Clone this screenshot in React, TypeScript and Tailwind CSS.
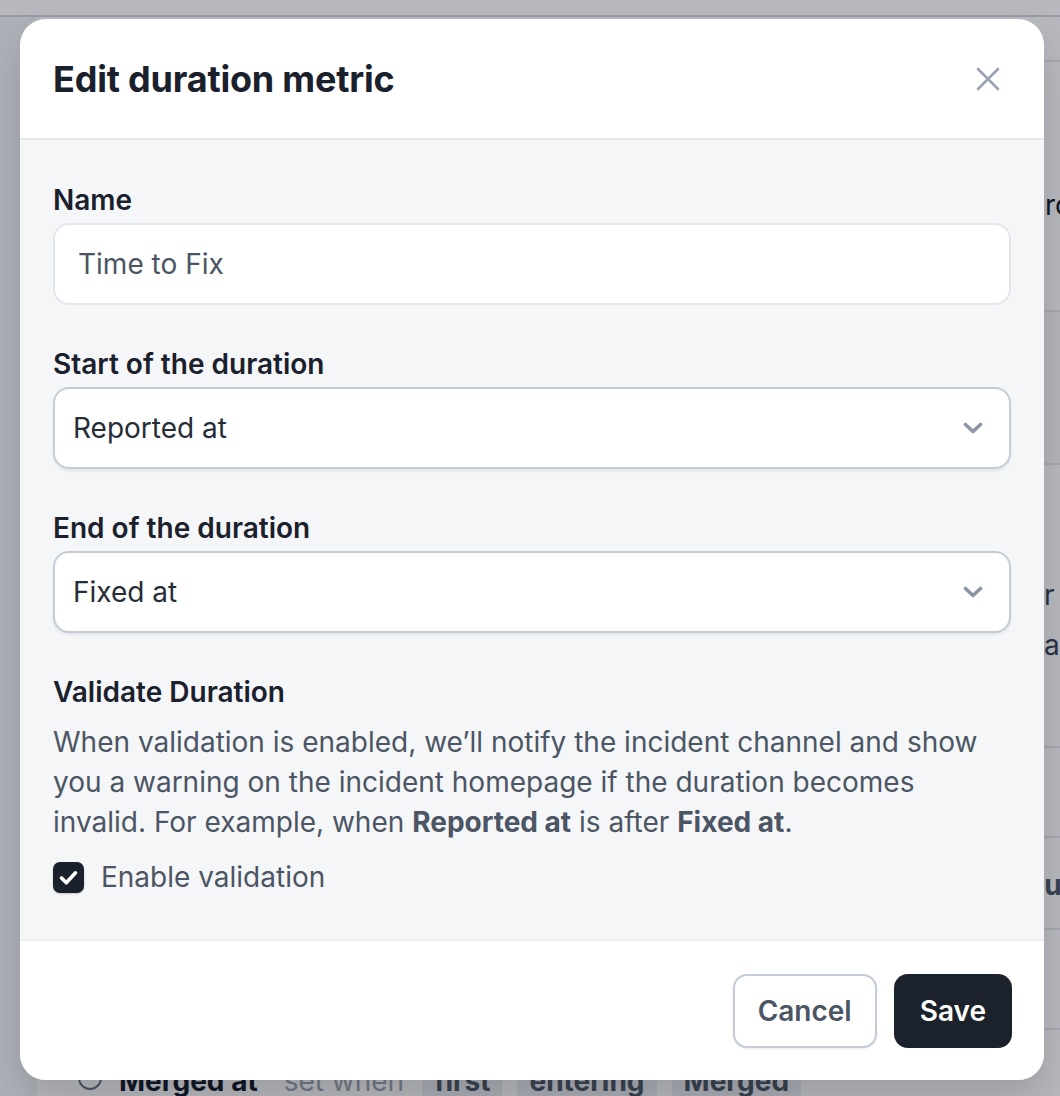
import { useState } from 'react';

const font = { fontFamily: 'Inter, "Noto Sans", sans-serif' };

const ChevronDown = () => (
  <svg width="20" height="12" viewBox="0 0 20 12" fill="none" className="shrink-0">
    <path d="M2.5 2.5 10 9.5l7.5-7" stroke="#8b95a5" strokeWidth="3.6" strokeLinecap="round" strokeLinejoin="round" />
  </svg>
);

const CloseIcon = () => (
  <svg width="24" height="24" viewBox="0 0 24 24" fill="none">
    <path d="M2 2l20 20M22 2 2 22" stroke="#9aa3b2" strokeWidth="2.6" strokeLinecap="round" />
  </svg>
);

const Field = ({ label, children }: { label: string; children: React.ReactNode }) => (
  <div className="flex flex-col">
    <label className="text-[28px] font-semibold leading-[36px] text-[#1a202c]">{label}</label>
    <div className="mt-[5px]">{children}</div>
  </div>
);

const SelectBox = ({ value }: { value: string }) => (
  <div className="flex h-[82px] items-center justify-between rounded-[16px] border-2 border-[#c4ccd8] bg-white pl-[18px] pr-[26px] shadow-[0_2px_3px_rgba(15,23,42,0.08)]">
    <span className="text-[28px] text-[#262d37]">{value}</span>
    <ChevronDown />
  </div>
);

// page behind the dialog, only its edges show
const BackgroundPage = () => (
  <div className="h-[1096px] bg-[#f3f4f6] text-[28px]">
    <div className="h-[17px] border-b-2 border-[#d1d5db] bg-white" />
    <div className="w-[1400px] pl-[37px]">
      <div className="bg-white">
        <div className="h-[45px] border-b-2 border-[#e5e7eb]" />
        <div className="h-[250px] border-b-2 border-[#e5e7eb] pl-[990px] pt-[122px] text-[#111827]">Process</div>
        <div className="h-[153px] border-b-2 border-[#e5e7eb] bg-[#f9fafb]" />
        <div className="flex h-[283px] flex-col border-b-2 border-[#e5e7eb] pl-[1007px] pt-[105px] leading-[50px] text-[#374151]">
          <span>r the</span>
          <span>are</span>
        </div>
        <div className="h-[90px] border-b-2 border-[#e5e7eb]" />
        <div className="h-[92px] border-b-2 border-[#e5e7eb] pl-[952px] pt-[26px] font-bold text-[#4b5563]">Status</div>
        <div className="h-[100px] border-b-2 border-[#e5e7eb]" />
        <div className="flex h-[120px] items-start pl-[41px] pt-[30px]">
          <span className="mt-[6px] h-[24px] w-[24px] rounded-full border-2 border-[#6b7280]" />
          <span className="ml-[17px] font-bold text-[#111827]">Merged at</span>
          <span className="ml-[26px] text-[#9ca3af]">set when</span>
          <span className="ml-[18px] rounded bg-[#eceef1] px-[12px] font-bold text-[#4b5563]">first</span>
          <span className="ml-[15px] rounded bg-[#eceef1] px-[12px] font-bold text-[#4b5563]">entering</span>
          <span className="ml-[15px] rounded bg-[#eceef1] px-[12px] font-bold text-[#4b5563]">Merged</span>
        </div>
      </div>
    </div>
  </div>
);

export default function App() {
  const [enabled, setEnabled] = useState(true);

  return (
    <div className="relative h-[1096px] w-[1060px] overflow-hidden" style={font}>
      <BackgroundPage />
      <div className="absolute inset-0 bg-[#111827]/[0.3]" />

      <div className="absolute left-[20px] top-[19px] flex w-[1024px] flex-col overflow-hidden rounded-[26px] bg-white shadow-[0_20px_40px_rgba(0,0,0,0.15)]">
        <div className="flex h-[121px] items-center justify-between border-b-2 border-[#e5e7eb] pl-[33px] pr-[44px]">
          <h2 className="text-[36px] font-bold tracking-[-0.2px] text-[#1a202c]">Edit duration metric</h2>
          <button type="button" aria-label="Close">
            <CloseIcon />
          </button>
        </div>

        <div className="flex flex-col bg-[#f5f6f8] px-[33px] pb-[44px] pt-[42px]">
          <Field label="Name">
            <div className="flex h-[82px] items-center rounded-[16px] border-2 border-[#e3e6ea] bg-white pl-[23px]">
              <span className="text-[28px] text-[#4b5563]">Time to Fix</span>
            </div>
          </Field>

          <div className="mt-[41px]">
            <Field label="Start of the duration">
              <SelectBox value="Reported at" />
            </Field>
          </div>

          <div className="mt-[41px]">
            <Field label="End of the duration">
              <SelectBox value="Fixed at" />
            </Field>
          </div>

          <h3 className="mt-[41px] text-[28px] font-semibold leading-[36px] text-[#1a202c]">Validate Duration</h3>
          <p className="mt-[12px] text-[28px] leading-[40px] text-[#4b5563]">
            When validation is enabled, we’ll notify the incident channel and show you a warning on the
            incident homepage if the duration becomes invalid. For example, when{' '}
            <span className="font-bold">Reported at</span> is after <span className="font-bold">Fixed at</span>.
          </p>

          <label className="mt-[17px] flex cursor-pointer items-center gap-[17px]">
            <button
              type="button"
              onClick={() => setEnabled(!enabled)}
              className="flex h-[31px] w-[31px] items-center justify-center rounded-[7px] bg-[#1a202c] shadow-[0_1px_2px_rgba(0,0,0,0.2)]"
            >
              {enabled ? (
                <svg width="31" height="31" viewBox="0 0 31 31" fill="none">
                  <path d="M8.5 16l4.8 4.8 9.2-10" stroke="white" strokeWidth="3.6" strokeLinecap="round" strokeLinejoin="round" />
                </svg>
              ) : null}
            </button>
            <span className="text-[28px] leading-[36px] text-[#4b5563]">Enable validation</span>
          </label>
        </div>

        <div className="flex h-[141px] items-center justify-end gap-[17px] border-t-2 border-[#eceef1] bg-white pr-[32px]">
          <button
            type="button"
            className="flex h-[74px] items-center rounded-[14px] border-2 border-[#c4ccd8] bg-white px-[23px] text-[28px] font-semibold text-[#4b5563] shadow-[0_1px_2px_rgba(15,23,42,0.08)]"
          >
            Cancel
          </button>
          <button
            type="button"
            className="flex h-[74px] items-center rounded-[14px] bg-[#1b222c] px-[26px] text-[28px] font-semibold text-white"
          >
            Save
          </button>
        </div>
      </div>
    </div>
  );
}
